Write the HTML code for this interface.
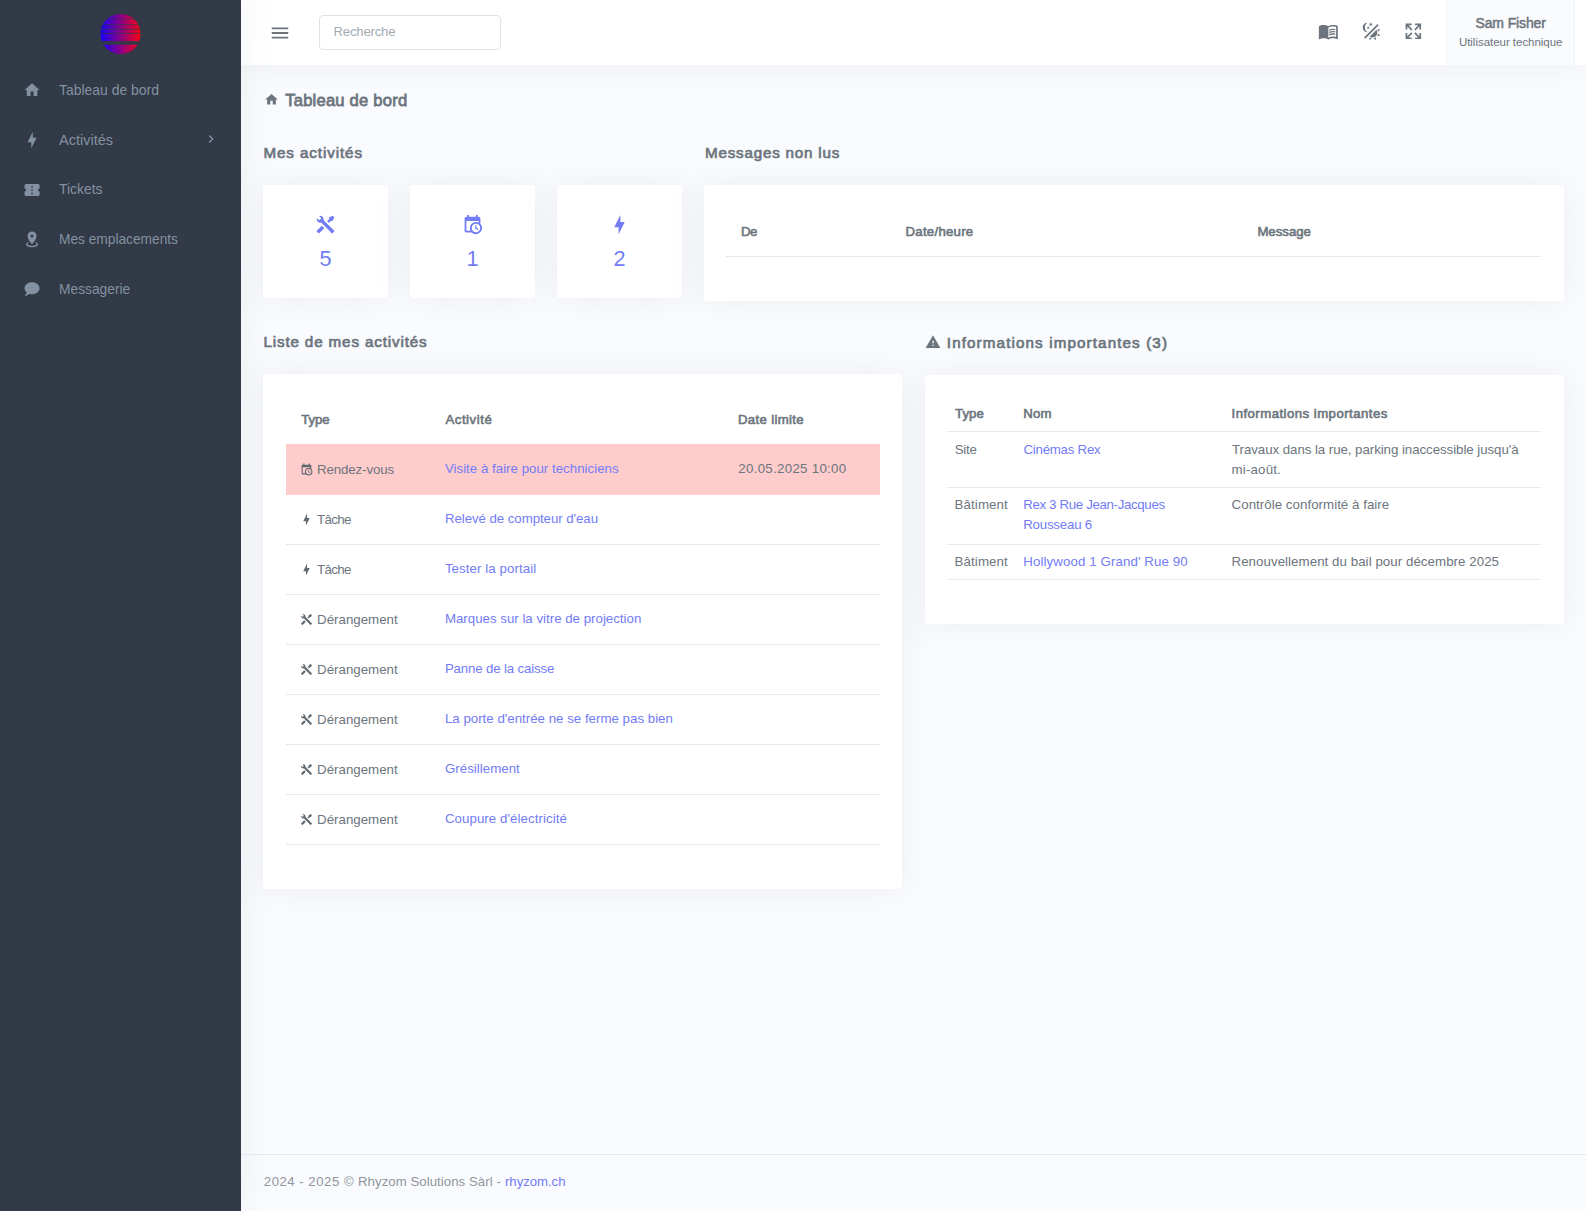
<!DOCTYPE html>
<html lang="fr">
<head>
<meta charset="utf-8">
<title>Tableau de bord</title>
<style>
*{box-sizing:border-box;margin:0;padding:0}
html,body{width:1586px;height:1211px;overflow:hidden}
body{font-family:"Liberation Sans",sans-serif;background:#fafbfe;color:#6c757d;font-size:13.3px;position:relative}
a{color:#727cf5;text-decoration:none}
svg{display:block}
.abs{position:absolute}
.tx{position:absolute;white-space:nowrap;line-height:20px;display:block}
#side{position:absolute;left:0;top:0;width:241px;height:1211px;background:#313a46;box-shadow:0 0 32px 0 rgba(154,161,171,.15)}
#top{position:absolute;left:241px;top:0;width:1345px;height:65px;background:#fff;box-shadow:0 0 32px 0 rgba(154,161,171,.15)}
#search{position:absolute;left:319px;top:15px;width:182px;height:35px;border:1px solid #dee2e6;border-radius:4px;background:#fff}
#user{position:absolute;left:1446px;top:0;width:129px;height:65px;background:#fafbfd;border-left:1px solid #f1f3fa;border-right:1px solid #f1f3fa}
.card{position:absolute;background:#fff;border-radius:3px;box-shadow:0 0 32px 0 rgba(154,161,171,.15)}
.ln{position:absolute;height:1px;background:#e5e8ee}
#footer{position:absolute;left:241px;top:1154px;width:1345px;height:1px;background:#e4e7ed}
</style>
</head>
<body>

<header id="top"></header>
<div id="side"></div>
<svg class="abs" style="left:100px;top:14px" width="41" height="41" viewBox="0 0 41 41">
<defs><linearGradient id="lg" x1="0" x2="1" y1="0" y2="0"><stop offset="0" stop-color="#1400ff"/><stop offset="1" stop-color="#ff0010"/></linearGradient>
<clipPath id="cp"><circle cx="20.5" cy="20" r="20"/></clipPath></defs>
<g clip-path="url(#cp)"><rect x="0" y="0" width="41" height="41" fill="url(#lg)"/>
<rect x="0" y="4.6" width="41" height="1" fill="#313a46" opacity=".55"/>
<rect x="0" y="10.1" width="41" height="1.2" fill="#313a46" opacity=".6"/>
<rect x="0" y="14.6" width="41" height="1.2" fill="#313a46" opacity=".65"/>
<rect x="0" y="18.8" width="41" height="1.2" fill="#313a46" opacity=".65"/>
<rect x="0" y="27.1" width="41" height="3.5" fill="#313a46"/></g>
</svg>
<nav>
<svg class="abs" style="left:23.3px;top:80.9px;fill:#8391a2" width="18.1" height="18.1" viewBox="0 0 24 24"><path d="M10,20V14H14V20H19V12H22L12,3L2,12H5V20H10Z"/></svg>
<a class="tx" href="#" style="top:79.60px;font-size:15px;color:#8391a2;transform:scaleX(0.9285);transform-origin:0 50%;left:59.20px;">Tableau de bord</a>
<svg class="abs" style="left:23.3px;top:130.75px;fill:#8391a2" width="18.1" height="18.1" viewBox="0 0 24 24"><path d="M11 15H6L13 1V9H18L11 23V15Z"/></svg>
<a class="tx" href="#" style="top:129.60px;font-size:15px;color:#8391a2;transform:scaleX(0.9667);transform-origin:0 50%;left:59.20px;">Activités</a>
<svg class="abs" style="left:23.3px;top:180.6px;fill:#8391a2" width="18.1" height="18.1" viewBox="0 0 24 24"><path d="M13,8.5H11V6.5H13V8.5M13,13H11V11H13V13M13,17.5H11V15.5H13V17.5M22,10V6C22,4.89 21.1,4 20,4H4A2,2 0 0,0 2,6V10C3.11,10 4,10.9 4,12A2,2 0 0,1 2,14V18A2,2 0 0,0 4,20H20A2,2 0 0,0 22,18V14A2,2 0 0,1 20,12C20,10.89 20.9,10 22,10Z"/></svg>
<a class="tx" href="#" style="top:178.60px;font-size:15px;color:#8391a2;transform:scaleX(0.9265);transform-origin:0 50%;left:59.20px;">Tickets</a>
<svg class="abs" style="left:23.3px;top:230.45px;fill:#8391a2" width="18.1" height="18.1" viewBox="0 0 24 24"><path d="M12,2C15.31,2 18,4.66 18,7.95C18,12.41 12,19 12,19C12,19 6,12.41 6,7.95C6,4.66 8.69,2 12,2M12,6A2,2 0 0,0 10,8A2,2 0 0,0 12,10A2,2 0 0,0 14,8A2,2 0 0,0 12,6M20,19C20,21.21 16.42,23 12,23C7.58,23 4,21.21 4,19C4,17.71 5.22,16.56 7.11,15.83L7.75,16.74C6.67,17.19 6,17.81 6,18.5C6,19.88 8.69,21 12,21C15.31,21 18,19.88 18,18.5C18,17.81 17.33,17.19 16.25,16.74L16.89,15.83C18.78,16.56 20,17.71 20,19Z"/></svg>
<a class="tx" href="#" style="top:228.60px;font-size:15px;color:#8391a2;transform:scaleX(0.9149);transform-origin:0 50%;left:59.20px;">Mes emplacements</a>
<svg class="abs" style="left:23.3px;top:280.3px;fill:#8391a2" width="18.1" height="18.1" viewBox="0 0 24 24"><path d="M12,3C17.5,3 22,6.58 22,11C22,15.42 17.5,19 12,19C10.76,19 9.57,18.82 8.47,18.5C5.55,21 2,21 2,21C4.33,18.67 4.7,17.1 4.75,16.5C3.05,15.07 2,13.13 2,11C2,6.58 6.5,3 12,3Z"/></svg>
<a class="tx" href="#" style="top:278.60px;font-size:15px;color:#8391a2;transform:scaleX(0.9182);transform-origin:0 50%;left:59.20px;">Messagerie</a>
<svg class="abs" style="left:202.5px;top:130.6px;fill:#8391a2" width="16" height="16" viewBox="0 0 24 24"><path d="M8.59,16.58L13.17,12L8.59,7.41L10,6L16,12L10,18L8.59,16.58Z"/></svg>
</nav>
<svg class="abs" style="left:269px;top:21.5px;fill:#6c757d" width="22" height="22" viewBox="0 0 24 24"><path d="M3,6H21V8H3V6M3,11H21V13H3V11M3,16H21V18H3V16Z"/></svg>
<div id="search"></div>
<span class="tx" style="top:21.60px;font-size:13.2px;color:#a3abb3;letter-spacing:-0.223px;left:333.50px;">Recherche</span>
<svg class="abs" style="left:1318.1px;top:20.8px;fill:#6c757d" width="20.7" height="20.7" viewBox="0 0 24 24"><path d="M21,5C19.89,4.65 18.67,4.5 17.5,4.5C15.55,4.5 13.45,4.9 12,6C10.55,4.9 8.45,4.5 6.5,4.5C4.55,4.5 2.45,4.9 1,6V20.65C1,20.9 1.25,21.15 1.5,21.15C1.6,21.15 1.65,21.1 1.75,21.1C3.1,20.45 5.05,20 6.5,20C8.45,20 10.55,20.4 12,21.5C13.35,20.65 15.8,20 17.5,20C19.15,20 20.85,20.3 22.25,21.05C22.35,21.1 22.4,21.1 22.5,21.1C22.75,21.1 23,20.85 23,20.6V6C22.4,5.55 21.75,5.25 21,5M21,18.5C19.9,18.15 18.7,18 17.5,18C15.8,18 13.35,18.65 12,19.5V8C13.35,7.15 15.8,6.5 17.5,6.5C18.7,6.5 19.9,6.65 21,7V18.5Z M17.5,10.5C18.38,10.5 19.23,10.59 20,10.76V9.24C19.21,9.09 18.36,9 17.5,9C15.8,9 14.26,9.29 13,9.83V11.49C14.13,10.85 15.7,10.5 17.5,10.5M13,12.49V14.15C14.13,13.51 15.7,13.16 17.5,13.16C18.38,13.16 19.23,13.25 20,13.42V11.9C19.21,11.75 18.36,11.66 17.5,11.66C15.8,11.66 14.26,11.96 13,12.49M17.5,14.33C15.8,14.33 14.26,14.62 13,15.16V16.82C14.13,16.18 15.7,15.83 17.5,15.83C18.38,15.83 19.23,15.92 20,16.09V14.57C19.21,14.41 18.36,14.33 17.5,14.33Z"/></svg>
<svg class="abs" style="left:1360.5px;top:20.9px;fill:#6c757d" width="20.7" height="20.7" viewBox="0 0 24 24"><path d="M7.5,2C5.71,3.15 4.5,5.18 4.5,7.5C4.5,9.82 5.71,11.85 7.53,13C4.46,13 2,10.54 2,7.5A5.5,5.5 0 0,1 7.5,2M19.07,3.5L20.5,4.93L4.93,20.5L3.5,19.07L19.07,3.5M12.89,5.93L11.41,5L9.97,6L10.39,4.3L9,3.24L10.75,3.12L11.33,1.47L12,3.1L13.73,3.13L12.38,4.26L12.89,5.93M9.59,9.54L8.43,8.81L7.31,9.59L7.65,8.27L6.56,7.44L7.92,7.35L8.37,6.06L8.88,7.33L10.24,7.36L9.19,8.23L9.59,9.54M19,13.5A5.5,5.5 0 0,1 13.5,19C12.28,19 11.15,18.6 10.24,17.93L17.93,10.24C18.6,11.15 19,12.28 19,13.5M14.6,20.08L17.37,18.93L17.13,22.28L14.6,20.08M18.93,17.38L20.08,14.61L22.28,17.15L18.93,17.38M20.08,12.42L18.94,9.64L22.28,9.88L20.08,12.42M9.63,18.93L12.4,20.08L9.87,22.27L9.63,18.93Z"/></svg>
<svg class="abs" style="left:1403.3px;top:20.8px;fill:#6c757d" width="20.7" height="20.7" viewBox="0 0 24 24"><path d="M9.5,13.09L10.91,14.5L6.41,19H10V21H3V14H5V17.59L9.5,13.09M10.91,9.5L9.5,10.91L5,6.41V10H3V3H10V5H6.41L10.91,9.5M14.5,13.09L19,17.59V14H21V21H14V19H17.59L13.09,14.5L14.5,13.09M13.09,9.5L17.59,5H14V3H21V10H19V6.41L14.5,10.91L13.09,9.5Z"/></svg>
<div id="user"></div>
<span class="tx" style="top:13.10px;font-size:14px;font-weight:normal;-webkit-text-stroke:0.50px;letter-spacing:-0.131px;left:1475.50px;">Sam Fisher</span>
<span class="tx" style="top:32.10px;font-size:11.5px;letter-spacing:-0.030px;left:1458.90px;">Utilisateur technique</span>
<svg class="abs" style="left:264.3px;top:92.1px;fill:#6c757d" width="15" height="15" viewBox="0 0 24 24"><path d="M10,20V14H14V20H19V12H22L12,3L2,12H5V20H10Z"/></svg>
<h4 class="tx" style="top:90.60px;font-size:16.6px;font-weight:normal;-webkit-text-stroke:0.76px;letter-spacing:0.212px;left:285.20px;">Tableau de bord</h4>
<h4 class="tx" style="top:142.60px;font-size:15.2px;font-weight:normal;-webkit-text-stroke:0.70px;letter-spacing:0.902px;left:263.40px;">Mes activités</h4>
<h4 class="tx" style="top:142.60px;font-size:15.2px;font-weight:normal;-webkit-text-stroke:0.70px;letter-spacing:0.792px;left:705.00px;">Messages non lus</h4>
<h4 class="tx" style="top:331.60px;font-size:15.2px;font-weight:normal;-webkit-text-stroke:0.70px;letter-spacing:0.863px;left:263.40px;">Liste de mes activités</h4>
<svg class="abs" style="left:924.9px;top:334.3px;fill:#6c757d" width="16" height="16" viewBox="0 0 24 24"><path d="M13,14H11V10H13M13,18H11V16H13M1,21H23L12,2L1,21Z"/></svg>
<h4 class="tx" style="top:332.60px;font-size:15.2px;font-weight:normal;-webkit-text-stroke:0.70px;letter-spacing:1.121px;left:946.80px;">Informations importantes (3)</h4>
<div class="card" style="left:263px;top:185px;width:125px;height:113px"></div>
<svg class="abs" style="left:315px;top:214px;fill:#727cf5" width="21" height="21" viewBox="0 0 24 24"><path d="M21.71 20.29L20.29 21.71A1 1 0 0 1 18.88 21.71L7 9.85A3.81 3.81 0 0 1 6 10A4 4 0 0 1 2.22 4.7L4.76 7.24L5.29 6.71L6.71 5.29L7.24 4.76L4.7 2.22A4 4 0 0 1 10 6A3.81 3.81 0 0 1 9.85 7L21.71 18.88A1 1 0 0 1 21.71 20.29M2.29 18.88A1 1 0 0 0 2.29 20.29L3.71 21.71A1 1 0 0 0 5.12 21.71L10.59 16.25L7.76 13.42M20 2L16 4V6L13.83 8.17L15.83 10.17L18 8H20L22 4Z"/></svg>
<span class="tx" style="top:248.60px;font-size:21.7px;color:#727cf5;left:319.47px;">5</span>
<div class="card" style="left:410px;top:185px;width:125px;height:113px"></div>
<svg class="abs" style="left:462px;top:214px;fill:#727cf5" width="21" height="21" viewBox="0 0 24 24"><path d="M15,13H16.5V15.82L18.94,17.23L18.19,18.53L15,16.69V13M19,8H5V19H9.67C9.24,18.09 9,17.07 9,16A7,7 0 0,1 16,9C17.07,9 18.09,9.24 19,9.67V8M5,21C3.89,21 3,20.1 3,19V5C3,3.89 3.89,3 5,3H6V1H8V3H16V1H18V3H19A2,2 0 0,1 21,5V11.1C22.24,12.36 23,14.09 23,16A7,7 0 0,1 16,23C14.09,23 12.36,22.24 11.1,21H5M16,11.15A4.85,4.85 0 0,0 11.15,16C11.15,18.68 13.32,20.85 16,20.85A4.85,4.85 0 0,0 20.85,16C20.85,13.32 18.68,11.15 16,11.15Z"/></svg>
<span class="tx" style="top:248.60px;font-size:21.7px;color:#727cf5;left:466.47px;">1</span>
<div class="card" style="left:557px;top:185px;width:125px;height:113px"></div>
<svg class="abs" style="left:609px;top:214px;fill:#727cf5" width="21" height="21" viewBox="0 0 24 24"><path d="M11 15H6L13 1V9H18L11 23V15Z"/></svg>
<span class="tx" style="top:248.60px;font-size:21.7px;color:#727cf5;left:613.47px;">2</span>
<div class="card" style="left:704px;top:185px;width:860px;height:116px"></div>
<span class="tx" style="top:221.60px;font-size:13.2px;font-weight:normal;-webkit-text-stroke:0.61px;letter-spacing:-0.459px;left:741.00px;">De</span>
<span class="tx" style="top:221.60px;font-size:13.2px;font-weight:normal;-webkit-text-stroke:0.61px;letter-spacing:0.272px;left:905.50px;">Date/heure</span>
<span class="tx" style="top:221.60px;font-size:13.2px;font-weight:normal;-webkit-text-stroke:0.61px;letter-spacing:-0.003px;left:1257.40px;">Message</span>
<div class="ln" style="left:726px;top:256px;width:815px"></div>
<div class="card" style="left:263px;top:374px;width:639px;height:515px"></div>
<span class="tx" style="top:409.60px;font-size:13.2px;font-weight:normal;-webkit-text-stroke:0.61px;letter-spacing:-0.131px;left:301.30px;">Type</span>
<span class="tx" style="top:409.60px;font-size:13.2px;font-weight:normal;-webkit-text-stroke:0.61px;letter-spacing:0.555px;left:445.40px;">Activité</span>
<span class="tx" style="top:409.60px;font-size:13.2px;font-weight:normal;-webkit-text-stroke:0.61px;letter-spacing:0.330px;left:738.00px;">Date limite</span>
<div class="abs" style="left:286px;top:444px;width:594px;height:50.5px;background:#ffcccc"></div>
<svg class="abs" style="left:299.8px;top:462.9px;fill:#616971" width="13" height="13" viewBox="0 0 24 24"><path d="M15,13H16.5V15.82L18.94,17.23L18.19,18.53L15,16.69V13M19,8H5V19H9.67C9.24,18.09 9,17.07 9,16A7,7 0 0,1 16,9C17.07,9 18.09,9.24 19,9.67V8M5,21C3.89,21 3,20.1 3,19V5C3,3.89 3.89,3 5,3H6V1H8V3H16V1H18V3H19A2,2 0 0,1 21,5V11.1C22.24,12.36 23,14.09 23,16A7,7 0 0,1 16,23C14.09,23 12.36,22.24 11.1,21H5M16,11.15A4.85,4.85 0 0,0 11.15,16C11.15,18.68 13.32,20.85 16,20.85A4.85,4.85 0 0,0 20.85,16C20.85,13.32 18.68,11.15 16,11.15Z"/></svg>
<span class="tx" style="top:459.60px;font-size:13.3px;letter-spacing:-0.136px;left:317.10px;">Rendez-vous</span>
<a class="tx" href="#" style="top:458.60px;font-size:13.3px;letter-spacing:0.008px;left:444.90px;">Visite à faire pour techniciens</a>
<span class="tx" style="top:458.60px;font-size:13.3px;letter-spacing:0.291px;left:738.30px;">20.05.2025 10:00</span>
<svg class="abs" style="left:299.8px;top:512.9px;fill:#616971" width="13" height="13" viewBox="0 0 24 24"><path d="M11 15H6L13 1V9H18L11 23V15Z"/></svg>
<span class="tx" style="top:509.60px;font-size:13.3px;letter-spacing:-0.667px;left:317.10px;">Tâche</span>
<a class="tx" href="#" style="top:508.60px;font-size:13.3px;letter-spacing:-0.070px;left:444.90px;">Relevé de compteur d'eau</a>
<div class="ln" style="left:286px;top:544px;width:594px"></div>
<svg class="abs" style="left:299.8px;top:562.9px;fill:#616971" width="13" height="13" viewBox="0 0 24 24"><path d="M11 15H6L13 1V9H18L11 23V15Z"/></svg>
<span class="tx" style="top:559.60px;font-size:13.3px;letter-spacing:-0.667px;left:317.10px;">Tâche</span>
<a class="tx" href="#" style="top:558.60px;font-size:13.3px;letter-spacing:0.077px;left:444.90px;">Tester la portail</a>
<div class="ln" style="left:286px;top:594px;width:594px"></div>
<svg class="abs" style="left:299.8px;top:612.9px;fill:#616971" width="13" height="13" viewBox="0 0 24 24"><path d="M21.71 20.29L20.29 21.71A1 1 0 0 1 18.88 21.71L7 9.85A3.81 3.81 0 0 1 6 10A4 4 0 0 1 2.22 4.7L4.76 7.24L5.29 6.71L6.71 5.29L7.24 4.76L4.7 2.22A4 4 0 0 1 10 6A3.81 3.81 0 0 1 9.85 7L21.71 18.88A1 1 0 0 1 21.71 20.29M2.29 18.88A1 1 0 0 0 2.29 20.29L3.71 21.71A1 1 0 0 0 5.12 21.71L10.59 16.25L7.76 13.42M20 2L16 4V6L13.83 8.17L15.83 10.17L18 8H20L22 4Z"/></svg>
<span class="tx" style="top:609.60px;font-size:13.3px;letter-spacing:0.002px;left:317.10px;">Dérangement</span>
<a class="tx" href="#" style="top:608.60px;font-size:13.3px;letter-spacing:-0.006px;left:444.90px;">Marques sur la vitre de projection</a>
<div class="ln" style="left:286px;top:644px;width:594px"></div>
<svg class="abs" style="left:299.8px;top:662.9px;fill:#616971" width="13" height="13" viewBox="0 0 24 24"><path d="M21.71 20.29L20.29 21.71A1 1 0 0 1 18.88 21.71L7 9.85A3.81 3.81 0 0 1 6 10A4 4 0 0 1 2.22 4.7L4.76 7.24L5.29 6.71L6.71 5.29L7.24 4.76L4.7 2.22A4 4 0 0 1 10 6A3.81 3.81 0 0 1 9.85 7L21.71 18.88A1 1 0 0 1 21.71 20.29M2.29 18.88A1 1 0 0 0 2.29 20.29L3.71 21.71A1 1 0 0 0 5.12 21.71L10.59 16.25L7.76 13.42M20 2L16 4V6L13.83 8.17L15.83 10.17L18 8H20L22 4Z"/></svg>
<span class="tx" style="top:659.60px;font-size:13.3px;letter-spacing:0.002px;left:317.10px;">Dérangement</span>
<a class="tx" href="#" style="top:658.60px;font-size:13.3px;letter-spacing:-0.175px;left:444.90px;">Panne de la caisse</a>
<div class="ln" style="left:286px;top:694px;width:594px"></div>
<svg class="abs" style="left:299.8px;top:712.9px;fill:#616971" width="13" height="13" viewBox="0 0 24 24"><path d="M21.71 20.29L20.29 21.71A1 1 0 0 1 18.88 21.71L7 9.85A3.81 3.81 0 0 1 6 10A4 4 0 0 1 2.22 4.7L4.76 7.24L5.29 6.71L6.71 5.29L7.24 4.76L4.7 2.22A4 4 0 0 1 10 6A3.81 3.81 0 0 1 9.85 7L21.71 18.88A1 1 0 0 1 21.71 20.29M2.29 18.88A1 1 0 0 0 2.29 20.29L3.71 21.71A1 1 0 0 0 5.12 21.71L10.59 16.25L7.76 13.42M20 2L16 4V6L13.83 8.17L15.83 10.17L18 8H20L22 4Z"/></svg>
<span class="tx" style="top:709.60px;font-size:13.3px;letter-spacing:0.002px;left:317.10px;">Dérangement</span>
<a class="tx" href="#" style="top:708.60px;font-size:13.3px;letter-spacing:0.000px;left:444.90px;">La porte d'entrée ne se ferme pas bien</a>
<div class="ln" style="left:286px;top:744px;width:594px"></div>
<svg class="abs" style="left:299.8px;top:762.9px;fill:#616971" width="13" height="13" viewBox="0 0 24 24"><path d="M21.71 20.29L20.29 21.71A1 1 0 0 1 18.88 21.71L7 9.85A3.81 3.81 0 0 1 6 10A4 4 0 0 1 2.22 4.7L4.76 7.24L5.29 6.71L6.71 5.29L7.24 4.76L4.7 2.22A4 4 0 0 1 10 6A3.81 3.81 0 0 1 9.85 7L21.71 18.88A1 1 0 0 1 21.71 20.29M2.29 18.88A1 1 0 0 0 2.29 20.29L3.71 21.71A1 1 0 0 0 5.12 21.71L10.59 16.25L7.76 13.42M20 2L16 4V6L13.83 8.17L15.83 10.17L18 8H20L22 4Z"/></svg>
<span class="tx" style="top:759.60px;font-size:13.3px;letter-spacing:0.002px;left:317.10px;">Dérangement</span>
<a class="tx" href="#" style="top:758.60px;font-size:13.3px;letter-spacing:0.024px;left:444.90px;">Grésillement</a>
<div class="ln" style="left:286px;top:794px;width:594px"></div>
<svg class="abs" style="left:299.8px;top:812.9px;fill:#616971" width="13" height="13" viewBox="0 0 24 24"><path d="M21.71 20.29L20.29 21.71A1 1 0 0 1 18.88 21.71L7 9.85A3.81 3.81 0 0 1 6 10A4 4 0 0 1 2.22 4.7L4.76 7.24L5.29 6.71L6.71 5.29L7.24 4.76L4.7 2.22A4 4 0 0 1 10 6A3.81 3.81 0 0 1 9.85 7L21.71 18.88A1 1 0 0 1 21.71 20.29M2.29 18.88A1 1 0 0 0 2.29 20.29L3.71 21.71A1 1 0 0 0 5.12 21.71L10.59 16.25L7.76 13.42M20 2L16 4V6L13.83 8.17L15.83 10.17L18 8H20L22 4Z"/></svg>
<span class="tx" style="top:809.60px;font-size:13.3px;letter-spacing:0.002px;left:317.10px;">Dérangement</span>
<a class="tx" href="#" style="top:808.60px;font-size:13.3px;letter-spacing:0.055px;left:444.90px;">Coupure d'électricité</a>
<div class="ln" style="left:286px;top:844px;width:594px"></div>
<div class="card" style="left:925px;top:375px;width:639px;height:249px"></div>
<span class="tx" style="top:403.60px;font-size:13.2px;font-weight:normal;-webkit-text-stroke:0.61px;letter-spacing:0.052px;left:955.00px;">Type</span>
<span class="tx" style="top:403.60px;font-size:13.2px;font-weight:normal;-webkit-text-stroke:0.61px;letter-spacing:0.278px;left:1023.20px;">Nom</span>
<span class="tx" style="top:403.60px;font-size:13.2px;font-weight:normal;-webkit-text-stroke:0.61px;letter-spacing:0.463px;left:1231.50px;">Informations importantes</span>
<div class="ln" style="left:947px;top:431px;width:594px"></div>
<div class="ln" style="left:947px;top:487px;width:594px"></div>
<div class="ln" style="left:947px;top:544px;width:594px"></div>
<div class="ln" style="left:947px;top:579px;width:594px"></div>
<span class="tx" style="top:439.60px;font-size:13.3px;letter-spacing:-0.274px;left:954.70px;">Site</span>
<a class="tx" href="#" style="top:439.60px;font-size:13.3px;letter-spacing:-0.261px;left:1023.50px;">Cinémas Rex</a>
<span class="tx" style="top:439.60px;font-size:13.3px;letter-spacing:-0.062px;left:1232.00px;">Travaux dans la rue, parking inaccessible jusqu'à</span>
<span class="tx" style="top:459.60px;font-size:13.3px;letter-spacing:0.179px;left:1231.50px;">mi-août.</span>
<span class="tx" style="top:494.60px;font-size:13.3px;letter-spacing:0.117px;left:954.50px;">Bâtiment</span>
<a class="tx" href="#" style="top:494.60px;font-size:13.3px;letter-spacing:-0.353px;left:1023.20px;">Rex 3 Rue Jean-Jacques</a>
<a class="tx" href="#" style="top:514.60px;font-size:13.3px;letter-spacing:-0.219px;left:1023.20px;">Rousseau 6</a>
<span class="tx" style="top:494.60px;font-size:13.3px;letter-spacing:0.035px;left:1231.60px;">Contrôle conformité à faire</span>
<span class="tx" style="top:551.60px;font-size:13.3px;letter-spacing:0.117px;left:954.50px;">Bâtiment</span>
<a class="tx" href="#" style="top:551.60px;font-size:13.3px;letter-spacing:0.096px;left:1023.20px;">Hollywood 1 Grand' Rue 90</a>
<span class="tx" style="top:551.60px;font-size:13.3px;letter-spacing:0.053px;left:1231.50px;">Renouvellement du bail pour décembre 2025</span>
<div id="footer"></div>
<span class="tx" style="top:1171.60px;font-size:13.2px;color:#8f969d;letter-spacing:0.502px;left:263.80px;">2024 - 2025 ©</span>
<span class="tx" style="top:1171.60px;font-size:13.2px;color:#8f969d;letter-spacing:0.061px;left:358.00px;">Rhyzom Solutions Sàrl -</span>
<a class="tx" href="#" style="top:1171.60px;font-size:13.2px;letter-spacing:-0.041px;left:505.00px;">rhyzom.ch</a>
</body>
</html>
